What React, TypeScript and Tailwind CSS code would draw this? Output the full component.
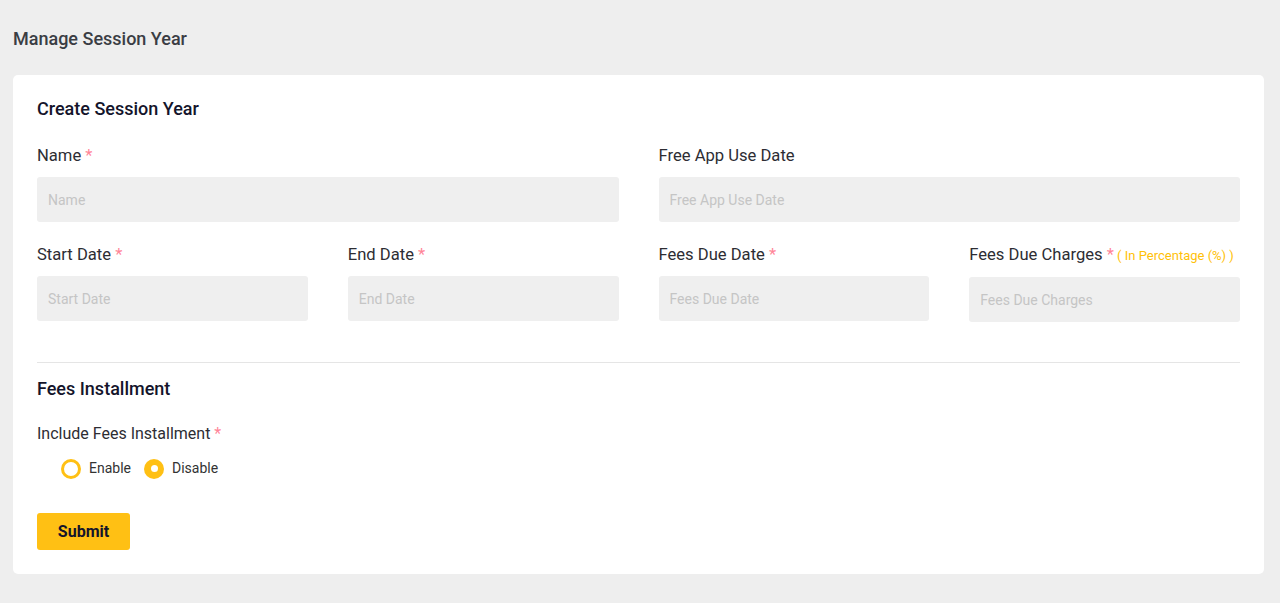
import { useState } from 'react';

const Star = () => <span className="text-[#ff8598]"> *</span>;

function Field({ label, placeholder, required, extra, className = '' }: { label: string; placeholder: string; required?: boolean; extra?: string; className?: string }) {
  return (
    <div className={className}>
      <label className="block text-[16.6px] leading-[22px] text-[#2d2d33] mb-[10px] mt-[2px]">
        {label}
        {required && <Star />}
        {extra && <span className="text-[13px] text-[#ffc107]"> {extra}</span>}
      </label>
      <input
        type="text"
        placeholder={placeholder}
        className="w-full h-[45px] rounded-[3px] bg-[#efefef] px-[11px] text-[14px] text-[#333] placeholder-[#c5c5c5] outline-none"
      />
    </div>
  );
}

export default function App() {
  const [installment, setInstallment] = useState('disable');

  return (
    <div className="min-h-[603px] bg-[#eeeeee] pl-[13px] pr-[16px] pt-[28px] pb-[29px]" style={{ fontFamily: 'Roboto, "Liberation Sans", sans-serif' }}>
      <h1 className="text-[18px] leading-[22px] font-medium text-[#3a3d44] mb-[25px]">Manage Session Year</h1>

      <div className="rounded-[5px] bg-white px-[24px] pt-[23px] pb-[24px]">
        <h2 className="text-[18px] leading-[22px] font-medium text-[#14142b] mb-[23px]">Create Session Year</h2>

        <div className="grid grid-cols-4 gap-x-10 gap-y-[20px]">
          <Field className="col-span-2" label="Name" placeholder="Name" required />
          <Field className="col-span-2" label="Free App Use Date" placeholder="Free App Use Date" />
          <Field label="Start Date" placeholder="Start Date" required />
          <Field label="End Date" placeholder="End Date" required />
          <Field label="Fees Due Date" placeholder="Fees Due Date" required />
          <Field label="Fees Due Charges" placeholder="Fees Due Charges" required extra="( In Percentage (%) )" />
        </div>

        <hr className="mt-[40px] border-t border-[#e5e5e5]" />

        <h2 className="mt-[15px] text-[18px] leading-[22px] font-medium text-[#14142b]">Fees Installment</h2>

        <div className="mt-[23px] text-[16px] leading-[22px] text-[#2d2d33]">
          Include Fees Installment<Star />
        </div>

        <div className="mt-[13px] ml-[24px] flex items-center gap-[13px] text-[14px] text-[#333]">
          {[
            ['enable', 'Enable'],
            ['disable', 'Disable'],
          ].map(([val, text]) => (
            <label key={val} className="flex items-center gap-[8px] cursor-pointer" onClick={() => setInstallment(val)}>
              {installment === val ? (
                <span className="flex h-[20px] w-[20px] items-center justify-center rounded-full bg-[#ffc014]">
                  <span className="h-[7px] w-[7px] rounded-full bg-white" />
                </span>
              ) : (
                <span className="h-[20px] w-[20px] rounded-full border-[3px] border-[#ffc014]" />
              )}
              {text}
            </label>
          ))}
        </div>

        <button className="mt-[34px] h-[37px] w-[93px] rounded-[3px] bg-[#ffc014] text-[16px] font-bold text-[#14142b]">
          Submit
        </button>
      </div>
    </div>
  );
}
